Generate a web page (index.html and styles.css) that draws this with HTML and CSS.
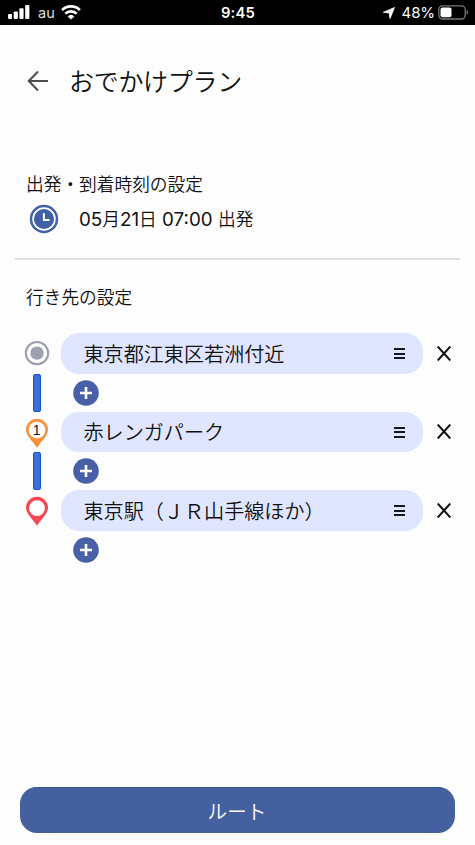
FILE: index.html
```html
<!DOCTYPE html>
<html lang="ja">
<head>
<meta charset="utf-8">
<title>おでかけプラン</title>
<link rel="stylesheet" href="styles.css">
</head>
<body>
<div class="status">
  <div class="status-left">
    <svg class="signal" width="22" height="14" viewBox="0 0 22 14" fill="#fff"><rect x="0" y="9" width="4" height="5" rx="1"/><rect x="5.7" y="6.5" width="4.2" height="7.5" rx="1"/><rect x="11.4" y="3.3" width="4.2" height="10.7" rx="1"/><rect x="17.2" y="0" width="4.2" height="14" rx="1"/></svg>
    <span class="carrier">au</span>
    <svg class="wifi" width="20" height="15" viewBox="0 0 20 15" fill="none" stroke="#fff" stroke-width="2.7"><path d="M1.1 5.1a12.7 12.7 0 0 1 17.8 0"/><path d="M4.3 8.6a8.2 8.2 0 0 1 11.4 0"/><path d="M10 14.6 6.7 11.4a4.8 4.8 0 0 1 6.6 0Z" fill="#fff" stroke="none"/></svg>
  </div>
  <div class="time">9:45</div>
  <div class="status-right">
    <svg width="12" height="12" viewBox="0 0 12 12"><path d="M11.5.5 7 11.5 6.2 6 .3 5.3Z" fill="#fff" stroke="#fff" stroke-width=".8" stroke-linejoin="round"/></svg>
    <span class="percent">48%</span>
    <svg width="31" height="15" viewBox="0 0 31 15"><rect x=".8" y=".8" width="26.4" height="13.2" rx="3.7" fill="none" stroke="#777" stroke-width="1.3"/><rect x="2.5" y="2.5" width="11" height="9.8" rx="2" fill="#fff"/><path d="M28.6 5v4.8q1.5-.7 1.5-2.4T28.6 5Z" fill="#777"/></svg>
  </div>
</div>
<header class="header">
  <svg width="22" height="22" viewBox="0 0 22 22" fill="none" stroke="#4c4c4c" stroke-width="2"><path d="M11 1.5 1.7 11l9.3 9.5M2 11h19"/></svg>
  <h1>おでかけプラン</h1>
</header>
<section class="schedule">
  <h2>出発・到着時刻の設定</h2>
  <div class="when">
    <svg width="30" height="30" viewBox="0 0 30 30"><circle cx="15" cy="15" r="14.2" fill="#4060a8"/><circle cx="15" cy="15" r="10.9" fill="none" stroke="#fff" stroke-width="1.7"/><path d="M14.9 9.3v6.6h5.6" fill="none" stroke="#fff" stroke-width="2"/></svg>
    <span class="date"><b>05</b>月<b>21</b>日<b> 07:00 </b>出発</span>
  </div>
</section>
<section class="places">
  <h2>行き先の設定</h2>
  <div class="route">
    <div class="stop">
      <svg class="marker" width="26" height="30" viewBox="0 0 26 30"><circle cx="13" cy="15.1" r="11.2" fill="#fff" stroke="#9a9dab" stroke-width="2"/><circle cx="13" cy="15.1" r="6.7" fill="#9da0ae"/></svg>
      <div class="pill"><span>東京都江東区若洲付近</span><i class="grip"></i></div>
      <svg class="close" viewBox="0 0 14 15"><path d="m.7.5 12.6 14M13.3.5.7 14.5"/></svg>
    </div>
    <div class="link"><i class="rail"></i><svg class="add" viewBox="0 0 26 26"><circle cx="13" cy="13" r="12.8"/><path d="M13 7v12M7 13h12"/></svg></div>
    <div class="stop">
      <svg class="marker pin" width="26" height="30" viewBox="0 0 26 30"><path d="M13 29.9C10 24.5 2 18 2 11.7a11 11 0 0 1 22 0C24 18 16 24.5 13 29.9Z" fill="#f8923b"/><circle cx="13" cy="12.1" r="8.4" fill="#fff"/><text class="number" x="12.7" y="16.7" text-anchor="middle">1</text></svg>
      <div class="pill"><span>赤レンガパーク</span><i class="grip"></i></div>
      <svg class="close" viewBox="0 0 14 15"><path d="m.7.5 12.6 14M13.3.5.7 14.5"/></svg>
    </div>
    <div class="link"><i class="rail"></i><svg class="add" viewBox="0 0 26 26"><circle cx="13" cy="13" r="12.8"/><path d="M13 7v12M7 13h12"/></svg></div>
    <div class="stop">
      <svg class="marker pin" width="26" height="30" viewBox="0 0 26 30"><path d="M13 29.9C10 24.5 2 18 2 11.7a11 11 0 0 1 22 0C24 18 16 24.5 13 29.9Z" fill="#f84751"/><circle cx="13" cy="12.1" r="7.9" fill="#fff"/></svg>
      <div class="pill"><span>東京駅（ＪＲ山手線ほか）</span><i class="grip"></i></div>
      <svg class="close" viewBox="0 0 14 15"><path d="m.7.5 12.6 14M13.3.5.7 14.5"/></svg>
    </div>
    <div class="link"><i></i><svg class="add" viewBox="0 0 26 26"><circle cx="13" cy="13" r="12.8"/><path d="M13 7v12M7 13h12"/></svg></div>
  </div>
</section>
<button class="submit">ルート</button>
</body>
</html>
```
FILE: styles.css
```css
* { box-sizing: border-box; }
body {
  margin: 0;
  height: 845px;
  display: flex;
  flex-direction: column;
  overflow: hidden;
  background: #fdfdfd;
  color: #111;
  font-family: Inter, "Noto Sans CJK JP", sans-serif;
}
svg { display: block; flex: none; }
h1, h2 { margin: 0; font-weight: 350; font-family: "Noto Sans CJK JP", sans-serif; }
.status {
  height: 25px;
  padding: 0 6px 0 8px;
  display: grid;
  grid-template-columns: 1fr auto 1fr;
  align-items: center;
  background: #000;
  color: #fff;
}
.status-left, .status-right { display: flex; align-items: center; }
.signal { margin-top: -1px; }
.status-right { justify-content: flex-end; }
.carrier { margin: 0 6px 0 8px; font-size: 14.5px; color: #ddd; }
.time { padding-right: 1px; font-size: 14.8px; font-weight: 600; letter-spacing: .2px; }
.percent { margin: 0 3px 0 7px; font-size: 15px; letter-spacing: -.1px; }
.header {
  height: 111px;
  padding-left: 27px;
  display: flex;
  align-items: center;
  gap: 20px;
}
.header h1 { margin-top: -2px; font-size: 25px; line-height: 36px; letter-spacing: -.3px; white-space: nowrap; }
.schedule {
  height: 124px;
  margin: 0 15px;
  padding: 34px 0 0 11px;
  border-bottom: 2px solid #dedee0;
}
h2 { font-size: 17.7px; line-height: 26px; }
.when {
  height: 30px;
  margin: 8px 0 0 3px;
  display: flex;
  align-items: center;
  gap: 20px;
  font-size: 17.7px;
  font-weight: 350;
}
.date { margin-top: -1px; white-space: pre; font-family: "Noto Sans CJK JP", sans-serif; line-height: 26px; }
.date b { font: 400 18.8px/26px Inter, sans-serif; }
.places { padding: 23px 0 0 24px; }
.places h2 { padding-left: 2px; }
.route { margin-top: 24px; }
.stop {
  height: 40.6px;
  display: grid;
  grid-template-columns: 25px 362px 15px;
  column-gap: 12px;
  align-items: center;
}
.marker { justify-self: center; }
.pin { margin-top: 2px; }
.number { font: 14px "Liberation Sans", sans-serif; fill: #181818; }
.pill {
  height: 40.6px;
  padding: 1px 18px 0 22.5px;
  display: flex;
  align-items: center;
  justify-content: space-between;
  border-radius: 18px;
  background: #e0e6ff;
  font: 350 20.1px/40px "Noto Sans CJK JP", sans-serif;
}
.grip {
  width: 11px;
  height: 11px;
  border-top: 2px solid #17171d;
  border-bottom: 2px solid #17171d;
  background: linear-gradient(#17171d, #17171d) 0 50% / 100% 2px no-repeat;
}
.close { width: 14px; height: 15px; margin-left: 2px; fill: none; stroke: #111; stroke-width: 2; }
.link {
  height: 38px;
  display: grid;
  grid-template-columns: 25px 26px;
  column-gap: 24px;
  align-items: center;
}
.rail {
  justify-self: center;
  width: 8px;
  height: 38px;
  border: 1px solid #1457cb;
  border-radius: 2px;
  background: #3a70dd;
}
.add { width: 26px; height: 26px; fill: #4760a7; }
.add path { fill: none; stroke: #fff; stroke-width: 2.6; }
.submit {
  height: 46px;
  margin: auto 20px 12px;
  padding: 0 1px 0 0;
  border: 0;
  border-top: 1px solid #315797;
  border-radius: 17px;
  background: #44609f;
  color: #fff;
  font: 350 19.6px/44px "Noto Sans CJK JP", sans-serif;
}
```
